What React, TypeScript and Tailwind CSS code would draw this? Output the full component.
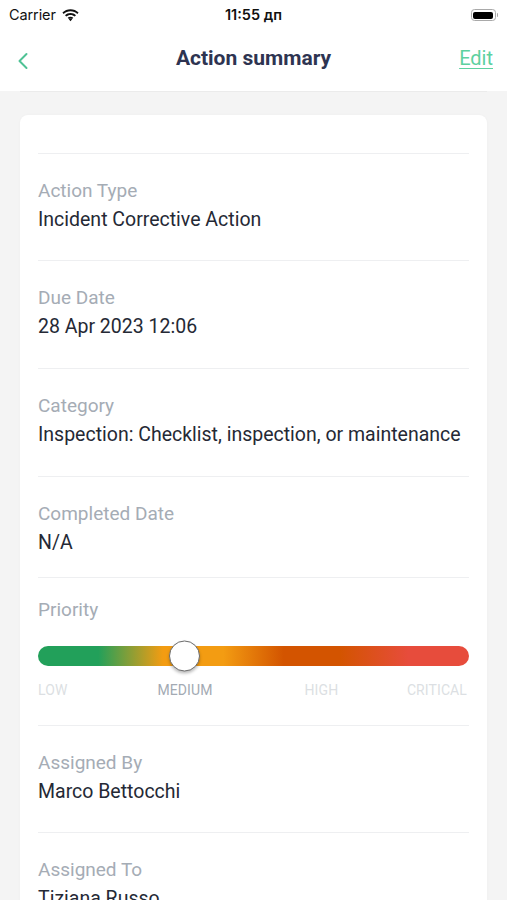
import React from "react";

function Wifi() {
  return (
    <svg width="17" height="13" viewBox="0 0 17 13" className="block">
      <path d="M8.5 2.2c2.6 0 5 1 6.8 2.7l1.3-1.3C14.4 1.5 11.6.3 8.5.3S2.6 1.5.4 3.6l1.3 1.3C3.5 3.2 5.9 2.2 8.5 2.2z" fill="#111" />
      <path d="M8.5 5.9c1.6 0 3.1.6 4.2 1.6l1.3-1.3C12.5 4.8 10.6 4 8.5 4S4.5 4.8 3 6.2l1.3 1.3c1.1-1 2.6-1.6 4.2-1.6z" fill="#111" />
      <path d="M8.5 9.5c.7 0 1.3.3 1.7.7l-1.7 2.1-1.7-2.1c.4-.4 1-.7 1.7-.7z" fill="#111" />
      <path d="M8.5 7.7c1.1 0 2.1.4 2.8 1.1L10.1 10c-.5-.4-1-.6-1.6-.6s-1.1.2-1.6.6L5.7 8.8c.7-.7 1.7-1.1 2.8-1.1z" fill="#111" />
    </svg>
  );
}

function Battery() {
  return (
    <div className="flex items-center">
      <div className="w-[25px] h-[12px] rounded-[3.5px] border border-[#a9a9a9] p-[1.5px]">
        <div className="w-full h-full rounded-[2px] bg-black" />
      </div>
      <div className="w-[1.5px] h-[4px] bg-[#a9a9a9] rounded-r-sm ml-[1px]" />
    </div>
  );
}

function Divider() {
  return <div className="h-px bg-[#eeeff1]" />;
}

function Field({ label, value, pb = "pb-[30px]" }: { label: string; value: string; pb?: string }) {
  return (
    <div className={`pt-[26px] ${pb}`}>
      <div className="text-[19px] leading-[22px] text-[#a5acb5]">{label}</div>
      <div className="mt-[7px] text-[19.5px] leading-[22px] text-[#252935] whitespace-nowrap">{value}</div>
    </div>
  );
}

export default function App() {
  return (
    <div
      className="w-[507px] h-[900px] overflow-hidden bg-[#f4f4f4]"
      style={{ fontFamily: "Roboto, 'Noto Sans', sans-serif" }}
    >
      <div className="bg-white">
        {/* status bar */}
        <div
          className="h-[30px] flex items-center px-[9px]"
          style={{ fontFamily: "Inter, 'Liberation Sans', sans-serif" }}
        >
          <div className="flex items-center gap-[6px] w-[120px]">
            <span className="text-[14.5px] text-[#111] tracking-[-0.1px]">Carrier</span>
            <Wifi />
          </div>
          <div className="flex-1 text-center text-[14.5px] font-semibold text-[#111]">11:55 дп</div>
          <div className="w-[120px] flex justify-end">
            <Battery />
          </div>
        </div>
        {/* nav bar */}
        <div className="h-[61px] flex items-center px-[16px]">
          <div className="w-[80px] flex items-center">
            <svg width="14" height="18" viewBox="0 0 14 18" className="block">
              <path d="M10.5 2 L3.5 9 L10.5 16" fill="none" stroke="#4fc295" strokeWidth="2" strokeLinecap="round" strokeLinejoin="round" />
            </svg>
          </div>
          <div className="flex-1 text-center text-[21px] font-bold text-[#2e3451] -mt-[4px]">Action summary</div>
          <div className="w-[80px] flex justify-end">
            <span className="text-[20px] text-[#5dd1a0] underline underline-offset-[3px] decoration-[1px] -mt-[5px] mr-[-2px]">Edit</span>
          </div>
        </div>
      </div>
      <div className="mx-[20px] h-px bg-[#ebebeb]" />
      {/* card */}
      <div className="mx-[20px] mt-[23px] bg-white rounded-[8px] px-[18px] pt-[38px] shadow-[0_0_3px_rgba(0,0,0,0.03)]">
        <Divider />
        <Field label="Action Type" value="Incident Corrective Action" pb="pb-[29px]" />
        <Divider />
        <Field label="Due Date" value="28 Apr 2023 12:06" />
        <Divider />
        <Field label="Category" value="Inspection: Checklist, inspection, or maintenance" />
        <Divider />
        <Field label="Completed Date" value="N/A" pb="pb-[23px]" />
        <Divider />
        {/* priority */}
        <div className="pt-[21px] pb-[27px]">
          <div className="text-[19px] leading-[22px] text-[#a5acb5]">Priority</div>
          <div className="relative mt-[25px] h-[20px]">
            <div
              className="h-[20px] rounded-full"
              style={{
                background:
                  "linear-gradient(to right, #22a05a 0%, #22a05a 14%, #f39c12 29%, #f39c12 43%, #d35400 57%, #d35400 70%, #e74c3c 86%, #e74c3c 100%)",
              }}
            />
            <div className="absolute top-1/2 left-[131px] -translate-y-1/2 w-[31px] h-[31px] rounded-full bg-white border-[1.5px] border-[#6b6b6b] shadow-[0_2px_3px_rgba(0,0,0,0.25)]" />
          </div>
          <div className="mt-[16px] flex text-[14px] leading-[16px] tracking-[0.1px]">
            <span className="text-[#dcdfe3]">LOW</span>
            <span className="ml-[90px] text-[#a3aab3]">MEDIUM</span>
            <span className="ml-[92px] text-[#dcdfe3]">HIGH</span>
            <span className="ml-auto mr-[2px] text-[#dcdfe3]">CRITICAL</span>
          </div>
        </div>
        <Divider />
        <Field label="Assigned By" value="Marco Bettocchi" pb="pb-[29px]" />
        <Divider />
        <Field label="Assigned To" value="Tiziana Russo" />
        <Divider />
      </div>
    </div>
  );
}
